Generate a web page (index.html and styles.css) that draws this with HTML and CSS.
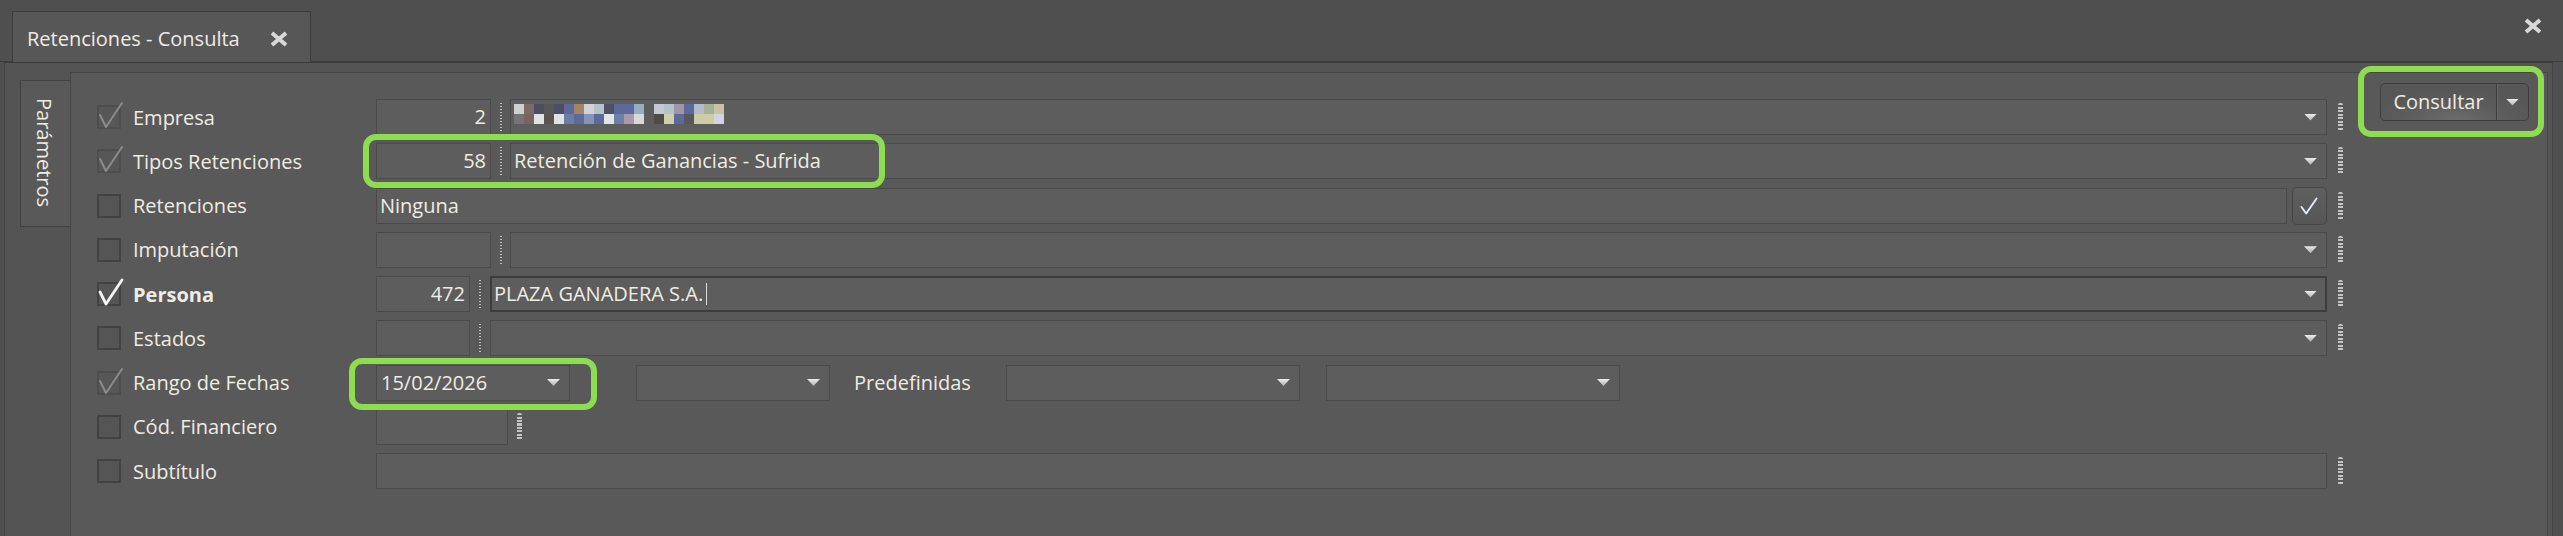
FILE: index.html
```html
<!DOCTYPE html>
<html lang="es">
<head>
<meta charset="utf-8">
<title>Retenciones - Consulta</title>
<link rel="stylesheet" href="styles.css">
</head>
<body>
<header class="tabbar">
  <div class="doc-tab">
    <span class="doc-tab-title">Retenciones - Consulta</span>
    <svg class="x-icon" viewBox="0 0 20 16"><path d="M3 2 L17 14 M17 2 L3 14"/></svg>
  </div>
  <svg class="x-icon win-x" viewBox="0 0 20 16"><path d="M3 2 L17 14 M17 2 L3 14"/></svg>
</header>

<div class="frame">
  <nav class="side-tabs">
    <div class="side-tab">Parámetros</div>
  </nav>

  <section class="content">
    <div class="form">
      <!-- Empresa -->
      <div class="row">
        <span class="cb cb-dis"><svg class="tick" viewBox="0 0 28 30"><path d="M3 14 L9 26 L25 2"/></svg></span>
        <span class="lbl">Empresa</span>
        <div class="field">
          <span class="box code">2</span>
          <span class="sep"></span>
          <div class="box combo">
            <span class="val">
              <svg class="mosaic" width="210" height="20" viewBox="0 0 210 20">
                <rect x="0" y="0" width="10" height="10" fill="#cfcfcf"/><rect x="0" y="10" width="10" height="10" fill="#757575"/>
                <rect x="10" y="0" width="10" height="10" fill="#7b6b66"/><rect x="10" y="10" width="10" height="10" fill="#7a625e"/>
                <rect x="20" y="0" width="10" height="10" fill="#4d4d62"/><rect x="20" y="10" width="10" height="10" fill="#dfe3e3"/>
                <rect x="30" y="0" width="10" height="10" fill="#575757"/><rect x="30" y="10" width="10" height="10" fill="#5a5550"/>
                <rect x="40" y="0" width="10" height="10" fill="#4d4d66"/><rect x="40" y="10" width="10" height="10" fill="#dfe3e3"/>
                <rect x="50" y="0" width="10" height="10" fill="#5b6a9a"/><rect x="50" y="10" width="10" height="10" fill="#6d7ca6"/>
                <rect x="60" y="0" width="10" height="10" fill="#a38463"/><rect x="60" y="10" width="10" height="10" fill="#5b6a9a"/>
                <rect x="70" y="0" width="10" height="10" fill="#cfd2d6"/><rect x="70" y="10" width="10" height="10" fill="#8493b6"/>
                <rect x="80" y="0" width="10" height="10" fill="#b3c2cb"/><rect x="80" y="10" width="10" height="10" fill="#5b6a9a"/>
                <rect x="90" y="0" width="10" height="10" fill="#505064"/><rect x="90" y="10" width="10" height="10" fill="#e3e6e6"/>
                <rect x="100" y="0" width="10" height="10" fill="#5b6a9a"/><rect x="100" y="10" width="10" height="10" fill="#6b7fa8"/>
                <rect x="110" y="0" width="10" height="10" fill="#5b6a9a"/><rect x="110" y="10" width="10" height="10" fill="#a999aa"/>
                <rect x="120" y="0" width="10" height="10" fill="#97adc4"/><rect x="120" y="10" width="10" height="10" fill="#d9d9d9"/>
                <rect x="140" y="0" width="10" height="10" fill="#c3cad3"/><rect x="140" y="10" width="10" height="10" fill="#4e4a48"/>
                <rect x="150" y="0" width="10" height="10" fill="#b3c3cb"/><rect x="150" y="10" width="10" height="10" fill="#cfd0a9"/>
                <rect x="160" y="0" width="10" height="10" fill="#a494a4"/><rect x="160" y="10" width="10" height="10" fill="#5b6a9a"/>
                <rect x="170" y="0" width="10" height="10" fill="#5b6a9a"/><rect x="170" y="10" width="10" height="10" fill="#585858"/>
                <rect x="180" y="0" width="10" height="10" fill="#b3bccb"/><rect x="180" y="10" width="10" height="10" fill="#cbcca8"/>
                <rect x="190" y="0" width="10" height="10" fill="#a9b09a"/><rect x="190" y="10" width="10" height="10" fill="#cdcca2"/>
                <rect x="200" y="0" width="10" height="10" fill="#c9c2a4"/><rect x="200" y="10" width="10" height="10" fill="#d3d3e2"/>
              </svg>
            </span>
            <span class="arrow"></span>
          </div>
        </div>
        <span class="grip"></span>
      </div>

      <!-- Tipos Retenciones -->
      <div class="row">
        <span class="cb cb-dis"><svg class="tick" viewBox="0 0 28 30"><path d="M3 14 L9 26 L25 2"/></svg></span>
        <span class="lbl">Tipos Retenciones</span>
        <div class="field hl-host">
          <span class="box code">58</span>
          <span class="sep"></span>
          <div class="box combo">
            <span class="val">Retención de Ganancias - Sufrida</span>
            <span class="arrow"></span>
          </div>
          <span class="hl hl-tipos"></span>
        </div>
        <span class="grip"></span>
      </div>

      <!-- Retenciones -->
      <div class="row">
        <span class="cb cb-off"></span>
        <span class="lbl">Retenciones</span>
        <div class="field">
          <span class="box text">Ninguna</span>
          <span class="chk-btn"><svg viewBox="0 0 35 38"><path d="M9 20 L14 27 L25 11"/></svg></span>
        </div>
        <span class="grip"></span>
      </div>

      <!-- Imputación -->
      <div class="row">
        <span class="cb cb-off"></span>
        <span class="lbl">Imputación</span>
        <div class="field">
          <span class="box code"></span>
          <span class="sep"></span>
          <div class="box combo">
            <span class="val"></span>
            <span class="arrow"></span>
          </div>
        </div>
        <span class="grip"></span>
      </div>

      <!-- Persona -->
      <div class="row">
        <span class="cb cb-on"><svg class="tick" viewBox="0 0 28 30"><path d="M3 14 L9 26 L25 2"/></svg></span>
        <span class="lbl bold">Persona</span>
        <div class="field">
          <span class="box code code-sm">472</span>
          <span class="sep sep-sm"></span>
          <div class="box combo focused">
            <span class="val">PLAZA GANADERA S.A.<span class="caret"></span></span>
            <span class="arrow"></span>
          </div>
        </div>
        <span class="grip"></span>
      </div>

      <!-- Estados -->
      <div class="row">
        <span class="cb cb-off"></span>
        <span class="lbl">Estados</span>
        <div class="field">
          <span class="box code code-sm"></span>
          <span class="sep sep-sm"></span>
          <div class="box combo">
            <span class="val"></span>
            <span class="arrow"></span>
          </div>
        </div>
        <span class="grip"></span>
      </div>

      <!-- Rango de Fechas -->
      <div class="row">
        <span class="cb cb-dis"><svg class="tick" viewBox="0 0 28 30"><path d="M3 14 L9 26 L25 2"/></svg></span>
        <span class="lbl">Rango de Fechas</span>
        <div class="field">
          <div class="box combo date hl-host">
            <span class="val">15/02/2026</span>
            <span class="arrow"></span>
            <span class="hl hl-date"></span>
          </div>
          <div class="box combo date date2">
            <span class="val"></span>
            <span class="arrow"></span>
          </div>
          <span class="inline-lbl">Predefinidas</span>
          <div class="box combo wide">
            <span class="val"></span>
            <span class="arrow"></span>
          </div>
          <div class="box combo wide wide2">
            <span class="val"></span>
            <span class="arrow"></span>
          </div>
        </div>
        <span class="grip none"></span>
      </div>

      <!-- Cód. Financiero -->
      <div class="row">
        <span class="cb cb-off"></span>
        <span class="lbl">Cód. Financiero</span>
        <div class="field">
          <span class="box fin"></span>
          <span class="grip grip-inline"></span>
        </div>
        <span class="grip none"></span>
      </div>

      <!-- Subtítulo -->
      <div class="row">
        <span class="cb cb-off"></span>
        <span class="lbl">Subtítulo</span>
        <div class="field">
          <span class="box text"></span>
        </div>
        <span class="grip"></span>
      </div>
    </div>

    <div class="actions">
      <div class="split-btn hl-host">
        <span class="split-main">Consultar</span>
        <span class="split-drop"><span class="arrow"></span></span>
        <span class="hl hl-btn"></span>
      </div>
    </div>
  </section>
</div>
</body>
</html>
```

FILE: styles.css
```css
* {
  box-sizing: border-box;
}

html,
body {
  margin: 0;
  padding: 0;
}

body {
  width: 2563px;
  height: 536px;
  overflow: hidden;
  background: #4f4f4f;
  font-family: "Open Sans", "Noto Sans", sans-serif;
  font-size: 20px;
  color: #efece2;
}

/* ---------- top tab bar ---------- */
.tabbar {
  height: 62px;
  display: flex;
  align-items: flex-end;
  padding: 0 20px 0 12px;
  border-bottom: 1px solid #3c3c3c;
}

.doc-tab {
  width: 299px;
  height: 51px;
  margin-bottom: -1px;
  display: flex;
  align-items: center;
  padding: 3px 21px 0 14px;
  background: #575757;
  border: 1px solid #3c3c3c;
  border-bottom: none;
}

.doc-tab-title {
  flex: 1;
  white-space: nowrap;
}

.x-icon {
  width: 20px;
  height: 16px;
  flex: none;
  fill: none;
  stroke: #d8d8d8;
  stroke-width: 4;
}

.win-x {
  align-self: flex-start;
  margin: 18px 0 0 auto;
}

/* ---------- window frame ---------- */
.frame {
  display: flex;
  height: 474px;
  margin: 0 10px 0 4px;
  background: #545454;
  border: 1px solid #434343;
  border-top-color: #3a3a3a;
  border-bottom: none;
}

.side-tabs {
  width: 65px;
  flex: none;
  padding: 17px 0 0 15px;
}

.side-tab {
  width: 50px;
  height: 147px;
  padding-top: 17px;
  padding-right: 3px;
  background: #595959;
  border: 1px solid #414141;
  border-right: none;
  writing-mode: vertical-rl;
  line-height: 46px;
  white-space: nowrap;
}

/* ---------- content panel ---------- */
.content {
  flex: 1;
  display: flex;
  margin: 9px 4px 0 0;
  padding: 10px 18px 0 26px;
  background: #595959;
  border: 1px solid #464646;
  border-bottom: none;
}

.form {
  flex: 1;
  display: flex;
  flex-direction: column;
  gap: 8.25px;
  padding-top: 16px;
}

.row {
  display: flex;
  align-items: center;
  height: 36px;
}

/* checkboxes */
.cb {
  position: relative;
  width: 24px;
  height: 24px;
  flex: none;
  margin-right: 12px;
}

.cb-off {
  background: #555555;
  border: 2px solid #424242;
}

.cb-dis {
  background: #575757;
  border: 2px solid #4e4e4e;
}

.cb-on {
  background: #555555;
  border: 2px solid #424242;
}

.tick {
  position: absolute;
  left: -2px;
  top: -6px;
  width: 28px;
  height: 30px;
  fill: none;
  stroke-linecap: round;
  stroke-linejoin: round;
}

.cb-dis .tick {
  stroke: #8c8c8c;
  stroke-width: 2;
}

.cb-on .tick {
  stroke: #f4f4f4;
  stroke-width: 2.8;
}

.lbl {
  width: 243px;
  flex: none;
  white-space: nowrap;
}

.bold {
  font-weight: 700;
}

.field {
  flex: 1;
  display: flex;
  align-items: center;
  height: 36px;
  min-width: 0;
}

.hl-host {
  position: relative;
}

/* generic boxes */
.box {
  height: 36px;
  line-height: 34px;
  padding: 0 3px;
  background: #5d5d5d;
  border: 1px solid #4a4a4a;
  white-space: nowrap;
  overflow: hidden;
}

.code {
  width: 115px;
  flex: none;
  text-align: right;
  padding-right: 4px;
}

.code-sm {
  width: 94px;
}

.sep {
  width: 19px;
  height: 28px;
  flex: none;
  display: flex;
  justify-content: center;
}

.sep::before {
  content: "";
  width: 2px;
  height: 28px;
  background: repeating-linear-gradient(to bottom, #c0c0c0 0 1px, transparent 1px 3px);
}

.sep-sm {
  width: 20px;
}

.combo {
  flex: 1;
  display: flex;
  align-items: center;
  padding-right: 9px;
  overflow: visible;
}

.combo .val {
  flex: 1;
  display: flex;
  align-items: center;
  height: 34px;
  overflow: hidden;
}

.focused {
  border: 2px solid #3d3d3d;
  padding-left: 2px;
  padding-right: 8px;
}

.caret {
  display: inline-block;
  width: 1px;
  height: 22px;
  margin-left: 3px;
  background: #dcdcdc;
}

.mosaic {
  display: block;
  margin-top: -6px;
}

.arrow {
  display: block;
  width: 13px;
  height: 7px;
  flex: none;
  clip-path: polygon(0 0, 100% 0, 50% 100%);
  background: linear-gradient(#ececec, #b0b0b0);
}

.text {
  flex: 1;
}

.chk-btn {
  width: 35px;
  height: 38px;
  flex: none;
  margin-left: 5px;
  border: 1px solid #454545;
  border-radius: 5px;
  background: linear-gradient(#5f5f5f, #565656);
}

.chk-btn svg {
  display: block;
  width: 33px;
  height: 36px;
  fill: none;
  stroke: #e4ebfa;
  stroke-width: 2;
  stroke-linecap: round;
  stroke-linejoin: round;
}

/* date row */
.date {
  flex: none;
  width: 194px;
}

.date .val {
  padding-left: 1px;
}

.date2 {
  margin-left: 66px;
}

.inline-lbl {
  width: 152px;
  flex: none;
  margin-left: 24px;
  white-space: nowrap;
}

.wide {
  flex: none;
  width: 294px;
}

.wide2 {
  margin-left: 26px;
}

.fin {
  width: 132px;
  flex: none;
}

/* grips */
.grip {
  width: 5px;
  height: 28px;
  flex: none;
  margin-left: 11px;
  border-radius: 2px;
  background: repeating-linear-gradient(to bottom, #c4c4c4 0 2px, transparent 2px 3.5px);
}

.grip.none {
  visibility: hidden;
}

.grip-inline {
  margin-left: 9px;
}

/* actions */
.actions {
  width: 149px;
  flex: none;
  margin-left: 37px;
}

.split-btn {
  display: flex;
  height: 38px;
  border: 1px solid #3d3d3d;
  border-radius: 5px;
  background: radial-gradient(ellipse 60% 80% at 50% 100%, #6c6c6c 0, #5d5d5d 55%, #575757 100%);
}

.split-main {
  width: 115px;
  flex: none;
  text-align: center;
  line-height: 35px;
  white-space: nowrap;
}

.split-drop {
  flex: 1;
  display: flex;
  align-items: center;
  justify-content: center;
  border-left: 1px solid #3d3d3d;
  box-shadow: inset 1px 0 0 #666666;
}

/* green highlight annotations */
.hl {
  position: absolute;
  border: 6px solid #8edc51;
  border-radius: 13px;
  pointer-events: none;
}

.hl-tipos {
  left: -13px;
  top: -9px;
  width: 522px;
  height: 54px;
}

.hl-date {
  left: -28px;
  top: -8px;
  width: 248px;
  height: 52px;
}

.hl-btn {
  left: -23px;
  top: -18px;
  width: 186px;
  height: 71px;
}
```
